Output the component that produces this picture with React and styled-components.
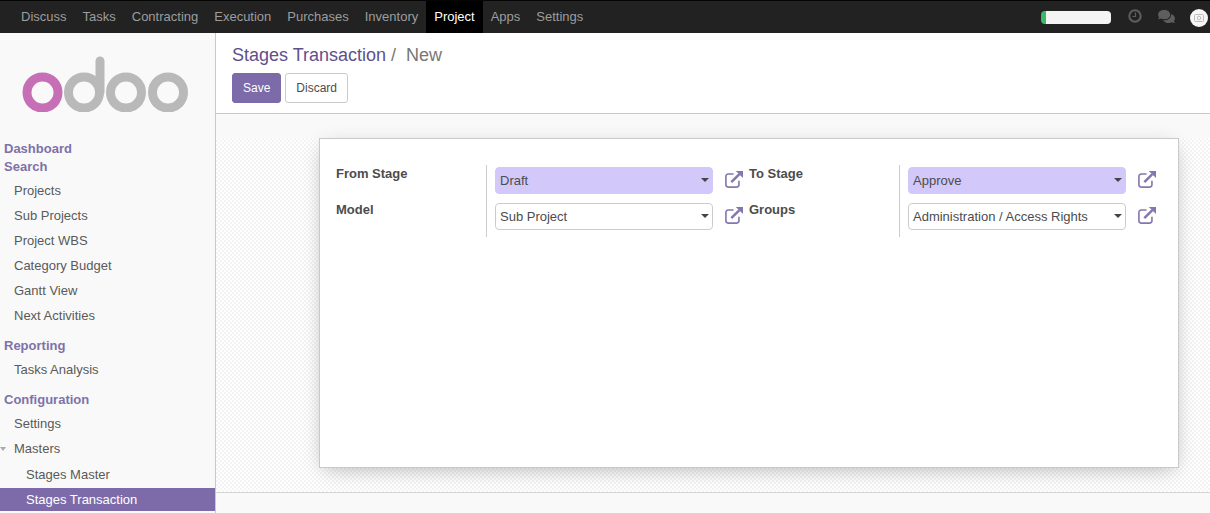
import styled, { createGlobalStyle } from 'styled-components';
import { FaComments } from 'react-icons/fa';

const GlobalStyle = createGlobalStyle`
  html, body {
    margin: 0;
    height: 100%;
    overflow: hidden;
    background: #fff;
  }
  * {
    box-sizing: border-box;
  }
  body {
    font-family: 'Liberation Sans', Arial, sans-serif;
    font-size: 13px;
    color: #4c4c4c;
  }
`;

const Page = styled.div`
  display: flex;
  flex-direction: column;
  width: 1210px;
  height: 513px;
  overflow: hidden;
`;

const TopBar = styled.nav`
  display: flex;
  justify-content: space-between;
  align-items: stretch;
  flex: none;
  height: 33px;
  padding-left: 13px;
  background: #222;
  border-top: 1px solid #050505;
`;

const TopMenu = styled.div`
  display: flex;
`;

const TopItem = styled.a`
  display: flex;
  align-items: center;
  padding: 0 8px 1px;
  font-size: 13px;
  color: ${(p) => (p.$active ? '#fff' : '#9d9d9d')};
  background: ${(p) => (p.$active ? '#000' : 'transparent')};
`;

const Systray = styled.div`
  display: flex;
  align-items: center;
  padding-right: 2px;
`;

const Progress = styled.div`
  width: 70px;
  height: 13px;
  margin-right: 17px;
  margin-top: 1px;
  border-radius: 4px;
  overflow: hidden;
  background: #f4f4f4;
  border-left: 5px solid #3cb86a;
`;

const ClockIcon = styled.svg`
  width: 14px;
  height: 14px;
  margin-right: 16px;
  margin-top: -2px;
`;

const ChatIcon = styled(FaComments)`
  width: 17px;
  height: 15px;
  margin-right: 15px;
  margin-top: -2px;
  color: #5e5e5e;
`;

const Avatar = styled.div`
  display: flex;
  align-items: center;
  justify-content: center;
  width: 18px;
  height: 18px;
  margin-top: 1px;
  border-radius: 50%;
  background: #f6f6f6;
`;

const Body = styled.div`
  display: flex;
  flex: 1;
  min-height: 0;
`;

const Sidebar = styled.aside`
  flex: none;
  width: 216px;
  background: #f9f9f9;
  border-right: 1px solid #c9c9c9;
`;

const LogoWrap = styled.div`
  height: 107px;
  padding: 23px 0 0 22px;
`;

const MenuGroup = styled.div`
  margin-top: 2px;
  margin-bottom: ${(p) => p.$gap || 0}px;
`;

const Heading = styled.div`
  height: 18px;
  line-height: 18px;
  padding-left: 4px;
  font-weight: 700;
  color: #7f71a9;
`;

const MenuItem = styled.div`
  position: relative;
  display: flex;
  align-items: center;
  height: ${(p) => p.$h || 25}px;
  padding-left: ${(p) => p.$indent || 14}px;
  color: ${(p) => (p.$selected ? '#fff' : '#5a5a5a')};
  background: ${(p) => (p.$selected ? '#7c6ba8' : 'transparent')};
`;

const Caret = styled.span`
  position: absolute;
  left: 0;
  top: 11px;
  border-top: 4px solid #aaa;
  border-left: 3.5px solid transparent;
  border-right: 3.5px solid transparent;
`;

const Main = styled.main`
  display: flex;
  flex-direction: column;
  flex: 1;
  min-width: 0;
`;

const ControlPanel = styled.header`
  flex: none;
  height: 81px;
  padding: 11px 16px 0;
  background: #fff;
  border-bottom: 1px solid #c9c9c9;
`;

const Breadcrumb = styled.div`
  height: 22px;
  line-height: 22px;
  font-size: 18px;
  color: #777;
  white-space: pre;

  a {
    color: #5f4f8c;
  }
`;

const Buttons = styled.div`
  display: flex;
  gap: 4px;
  margin-top: 7px;
`;

const Button = styled.button`
  height: 30px;
  padding: 0 10px;
  border-radius: 3px;
  font-family: inherit;
  font-size: 12px;
  border: 1px solid ${(p) => (p.$primary ? '#7c6ba8' : '#ccc')};
  background: ${(p) => (p.$primary ? '#7c6ba8' : '#fff')};
  color: ${(p) => (p.$primary ? '#fff' : '#4c4c4c')};
`;

const FormArea = styled.div`
  flex: 1;
  min-height: 0;
  background: #f9f9f9;
  padding-top: 24px;
`;

const Checker = styled.div`
  height: 355px;
  padding-left: 103px;
  background-color: #fff;
  background-image: repeating-conic-gradient(#f4f4f4 0 25%, #fff 0 50%);
  background-size: 4px 4px;
  border-bottom: 1px solid #d4d4d4;
`;

const Sheet = styled.section`
  width: 860px;
  height: 330px;
  padding: 26px 16px 0;
  background: #fff;
  border: 1px solid #c9c9c9;
  box-shadow: 0 5px 20px -5px rgba(0, 0, 0, 0.3);
`;

const FormGrid = styled.div`
  display: grid;
  grid-template-columns: 150px 263px 150px 263px;
  grid-auto-rows: 36px;
`;

const Label = styled.label`
  height: 18px;
  line-height: 18px;
  font-weight: 700;
  color: #4c4c4c;
  font-size: 13px;
  padding-top: 0;
`;

const Field = styled.div`
  display: flex;
  align-items: flex-start;
  padding: 2px 0 0 8px;
  border-left: 1px solid #ccc;
`;

const Select = styled.div`
  position: relative;
  display: flex;
  align-items: center;
  width: 218px;
  height: 27px;
  padding-left: 4px;
  border-radius: 4px;
  color: #4c4c4c;
  background: ${(p) => (p.$required ? '#d2c8fa' : '#fff')};
  border: 1px solid ${(p) => (p.$required ? '#d2c8fa' : '#ccc')};

  &::after {
    content: '';
    position: absolute;
    right: 3px;
    top: 10px;
    border-top: 4px solid #444;
    border-left: 4px solid transparent;
    border-right: 4px solid transparent;
  }
`;

const LinkIcon = styled.svg`
  flex: none;
  width: 20px;
  height: 18px;
  margin: 3px 0 0 11px;
`;

const ExternalLink = () => (
  <LinkIcon viewBox="0 0 22 20" fill="none" stroke="#8577ae">
    <path d="M10.5 4.5H4.5A2.5 2.5 0 0 0 2 7v9.5A2.5 2.5 0 0 0 4.5 19H14a2.5 2.5 0 0 0 2.5-2.5V12" strokeWidth="1.8" />
    <path d="M8 13.5L17 4.5" strokeWidth="2.8" />
    <path d="M13 1H21V9Z" fill="#8577ae" stroke="none" />
  </LinkIcon>
);

const Logo = () => (
  <svg width="168" height="56" viewBox="0 0 168 56" fill="none" strokeWidth="9">
    <circle cx="20.5" cy="36.5" r="15.5" stroke="#c76fb6" />
    <circle cx="62" cy="36.5" r="15.5" stroke="#b9b9b9" />
    <path d="M78 36V5" stroke="#b9b9b9" strokeLinecap="round" />
    <circle cx="104" cy="36.5" r="15.5" stroke="#b9b9b9" />
    <circle cx="146" cy="36.5" r="15.5" stroke="#b9b9b9" />
  </svg>
);

const topItems = ['Discuss', 'Tasks', 'Contracting', 'Execution', 'Purchases', 'Inventory', 'Project', 'Apps', 'Settings'];
const projectItems = ['Projects', 'Sub Projects', 'Project WBS', 'Category Budget', 'Gantt View', 'Next Activities'];

const App = () => (
  <Page>
    <GlobalStyle />
    <TopBar>
      <TopMenu>
        {topItems.map((item) => (
          <TopItem key={item} $active={item === 'Project'}>{item}</TopItem>
        ))}
      </TopMenu>
      <Systray>
        <Progress />
        <ClockIcon viewBox="0 0 14 14" fill="none" stroke="#5e5e5e">
          <circle cx="7" cy="7" r="5.7" strokeWidth="2" />
          <path d="M7.5 3.5V7.5H4.5" strokeWidth="1.2" />
        </ClockIcon>
        <ChatIcon />
        <Avatar>
          <svg width="10" height="9" viewBox="0 0 10 9" fill="none" stroke="#bbb">
            <rect x="0.5" y="1.5" width="9" height="7" rx="1" />
            <circle cx="5" cy="5" r="1.8" />
          </svg>
        </Avatar>
      </Systray>
    </TopBar>
    <Body>
      <Sidebar>
        <LogoWrap>
          <Logo />
        </LogoWrap>
        <Heading>Dashboard</Heading>
        <Heading>Search</Heading>
        <MenuGroup $gap={9}>
          {projectItems.map((item) => (
            <MenuItem key={item}>{item}</MenuItem>
          ))}
        </MenuGroup>
        <Heading>Reporting</Heading>
        <MenuGroup $gap={9}>
          <MenuItem>Tasks Analysis</MenuItem>
        </MenuGroup>
        <Heading>Configuration</Heading>
        <MenuGroup>
          <MenuItem>Settings</MenuItem>
          <MenuItem>
            <Caret />
            Masters
          </MenuItem>
          <MenuItem $indent={26} $h={27}>Stages Master</MenuItem>
          <MenuItem $indent={26} $h={23} $selected>Stages Transaction</MenuItem>
        </MenuGroup>
      </Sidebar>
      <Main>
        <ControlPanel>
          <Breadcrumb><a>Stages Transaction</a> /  New</Breadcrumb>
          <Buttons>
            <Button $primary>Save</Button>
            <Button>Discard</Button>
          </Buttons>
        </ControlPanel>
        <FormArea>
          <Checker>
            <Sheet>
              <FormGrid>
                <Label>From Stage</Label>
                <Field>
                  <Select $required>Draft</Select>
                  <ExternalLink />
                </Field>
                <Label>To Stage</Label>
                <Field>
                  <Select $required>Approve</Select>
                  <ExternalLink />
                </Field>
                <Label>Model</Label>
                <Field>
                  <Select>Sub Project</Select>
                  <ExternalLink />
                </Field>
                <Label>Groups</Label>
                <Field>
                  <Select>Administration / Access Rights</Select>
                  <ExternalLink />
                </Field>
              </FormGrid>
            </Sheet>
          </Checker>
        </FormArea>
      </Main>
    </Body>
  </Page>
);

export default App;
